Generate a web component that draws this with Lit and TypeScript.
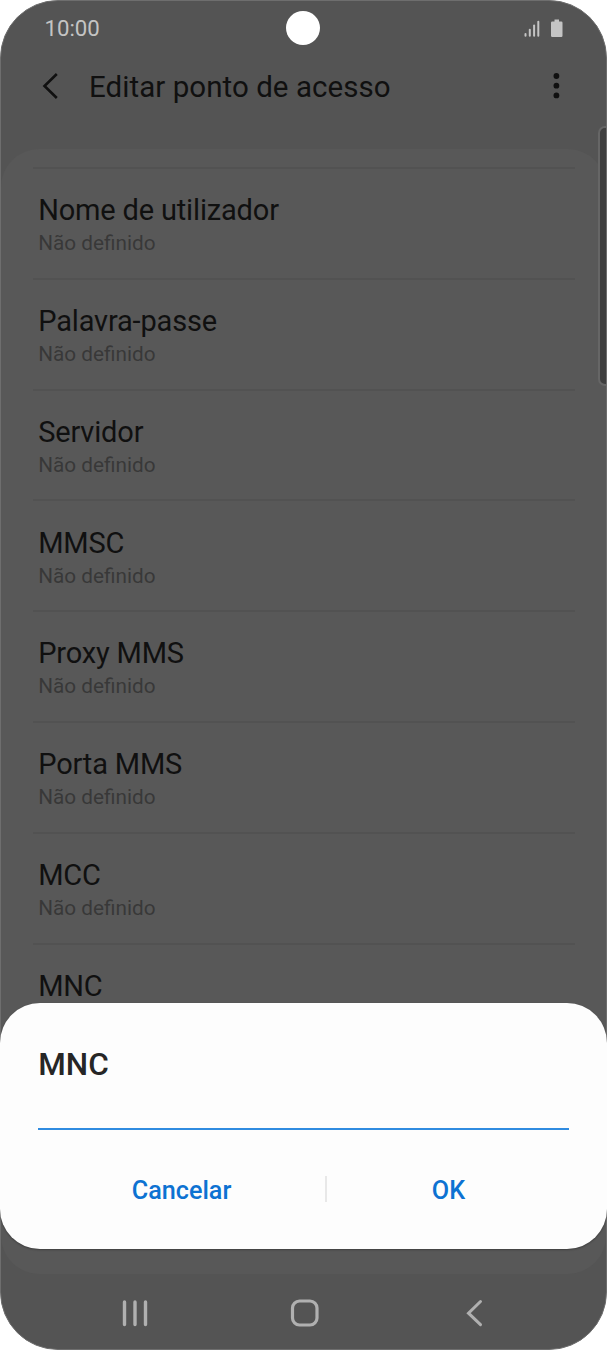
import { LitElement, html, css } from "lit";
import { customElement, property } from "lit/decorators.js";

@customElement("setting-row")
class SettingRow extends LitElement {
  @property() label = "";
  @property() value = "";

  static styles = css`
    :host {
      display: block;
      flex: none;
      box-sizing: border-box;
      height: 110.83px;
      padding: 24.1px 5.7px 0;
      border-top: 2px solid #525252;
    }
    .label {
      font-size: 29px;
      letter-spacing: -0.17px;
      line-height: 34px;
      color: #101010;
      white-space: nowrap;
    }
    .value {
      margin-top: 4px;
      font-size: 20.75px;
      line-height: 24px;
      color: #383838;
      white-space: nowrap;
    }
  `;

  render() {
    return html`
      <div class="label">${this.label}</div>
      <div class="value">${this.value}</div>
    `;
  }
}

@customElement("app-root")
class AppRoot extends LitElement {
  static styles = css`
    :host {
      display: block;
      height: 1350px;
      background: #fff;
      font-family: Roboto, sans-serif;
    }
    .stage {
      position: relative;
      width: 607px;
      height: 1350px;
    }
    .phone {
      position: relative;
      box-sizing: border-box;
      width: 607px;
      height: 1350px;
      border: 1px solid #6e6e6e;
      border-radius: 58px;
      overflow: hidden;
      background: #545454;
      display: flex;
      flex-direction: column;
    }
    .status {
      height: 55px;
      flex: none;
      padding: 0 41px 0 43.5px;
      display: flex;
      align-items: center;
      justify-content: space-between;
    }
    .time {
      font-size: 22.2px;
      line-height: 26px;
      margin-bottom: 1.5px;
      color: #c4c4c4;
    }
    .camera {
      position: absolute;
      left: 285.4px;
      top: 10px;
      width: 34px;
      height: 34px;
      border-radius: 50%;
      background: #fff;
    }
    svg {
      display: block;
    }
    .header {
      height: 93px;
      flex: none;
      box-sizing: border-box;
      padding: 13px 44px 0 40px;
      display: flex;
      align-items: flex-start;
    }
    .title {
      flex: 1;
      margin-left: 28px;
      padding-top: 1px;
      font-size: 29.5px;
      letter-spacing: 0.05px;
      line-height: 34px;
      color: #101010;
      white-space: nowrap;
    }
    .header svg {
      margin-top: 2px;
    }
    .list {
      height: 1125px;
      flex: none;
      box-sizing: border-box;
      padding: 18px 31px 0 31.5px;
      border-radius: 38px;
      background: #585858;
      overflow: hidden;
      display: flex;
      flex-direction: column;
    }
    .nav {
      flex: 1;
      display: grid;
      grid-template-columns: 168px 172px 22px;
      align-items: center;
      padding: 3px 0 0 121px;
    }
    .edge {
      position: absolute;
      right: -14px;
      top: 125px;
      width: 18px;
      height: 256px;
      border: 2px solid #666;
      border-radius: 7px;
      background: #3f3f3f;
    }
    .dialog {
      position: absolute;
      left: 0;
      top: 1003.4px;
      width: 607px;
      height: 245.2px;
      box-sizing: border-box;
      border-radius: 40px;
      background: #fdfdfd;
      box-shadow: 0 1px 2px rgba(0, 0, 0, 0.3);
      padding: 43px 38px 0;
    }
    .heading {
      padding-left: 0.3px;
      font-size: 31.5px;
      line-height: 38px;
      font-weight: 500;
      color: #262626;
    }
    .field {
      height: 44px;
      border-bottom: 2px solid #2f8be0;
    }
    .actions {
      margin-top: 46px;
      display: flex;
      height: 28px;
      align-items: center;
      color: #0d72d2;
      font-size: 25.2px;
      font-weight: 500;
    }
    .action {
      flex: none;
      text-align: center;
    }
    .cancel {
      width: 287px;
    }
    .ok {
      width: 243px;
    }
    .divider {
      flex: none;
      width: 2px;
      height: 26px;
      margin-top: -2px;
      background: #e8e8e8;
    }
  `;

  private labels = [
    "Nome de utilizador",
    "Palavra-passe",
    "Servidor",
    "MMSC",
    "Proxy MMS",
    "Porta MMS",
    "MCC",
    "MNC",
  ];

  render() {
    return html`
      <div class="stage">
        <div class="phone">
          <div class="status">
            <span class="time">10:00</span>
            <svg width="41" height="20" viewBox="0 0 41 20" fill="#c4c4c4">
              <rect x="0.5" y="14" width="2" height="3.7" rx="1" />
              <rect x="4.8" y="9.7" width="2" height="8" rx="1" />
              <rect x="9.1" y="5.4" width="2" height="12.3" rx="1" />
              <rect x="13.3" y="1.7" width="2" height="16" rx="1" />
              <path d="M30.5 0.5h4.500v2h2.300q1.200 0 1.200 1.200v13q0 1.200-1.200 1.200h-9.100q-1.200 0-1.200-1.200v-13q0-1.200 1.200-1.200h2.300z" />
            </svg>
          </div>
          <div class="header">
            <svg width="20" height="30" viewBox="0 0 20 30" fill="none" stroke="#101010" stroke-width="2.6">
              <path d="M15.8 3 3.5 15l12.3 12" />
            </svg>
            <div class="title">Editar ponto de acesso</div>
            <svg width="12" height="30" viewBox="0 0 12 30" fill="#101010">
              <circle cx="6.4" cy="5" r="2.9" />
              <circle cx="6.4" cy="14.7" r="2.9" />
              <circle cx="6.4" cy="24.4" r="2.9" />
            </svg>
          </div>
          <div class="list">
            ${this.labels.map(
              (l) => html`<setting-row label=${l} value="Não definido"></setting-row>`
            )}
          </div>
          <div class="nav">
            <svg width="27" height="28" viewBox="0 0 27 28" stroke="#b0b0b0" stroke-width="3.4" stroke-linecap="round">
              <path d="M2.5 3v22.500M13 3v22.500M23.500 3v22.500" />
            </svg>
            <svg width="30" height="30" viewBox="0 0 30 30" fill="none" stroke="#b0b0b0" stroke-width="3.2">
              <rect x="2.5" y="3" width="24.5" height="24" rx="7" />
            </svg>
            <svg width="22" height="28" viewBox="0 0 22 28" fill="none" stroke="#b0b0b0" stroke-width="3" stroke-linecap="round">
              <path d="M18.5 2.500 6.500 14.200l12 11.500" />
            </svg>
          </div>
          <div class="edge"></div>
          <div class="camera"></div>
        </div>
        <div class="dialog">
          <div class="heading">MNC</div>
          <div class="field"></div>
          <div class="actions">
            <span class="action cancel">Cancelar</span>
            <span class="divider"></span>
            <span class="action ok">OK</span>
          </div>
        </div>
      </div>
    `;
  }
}
